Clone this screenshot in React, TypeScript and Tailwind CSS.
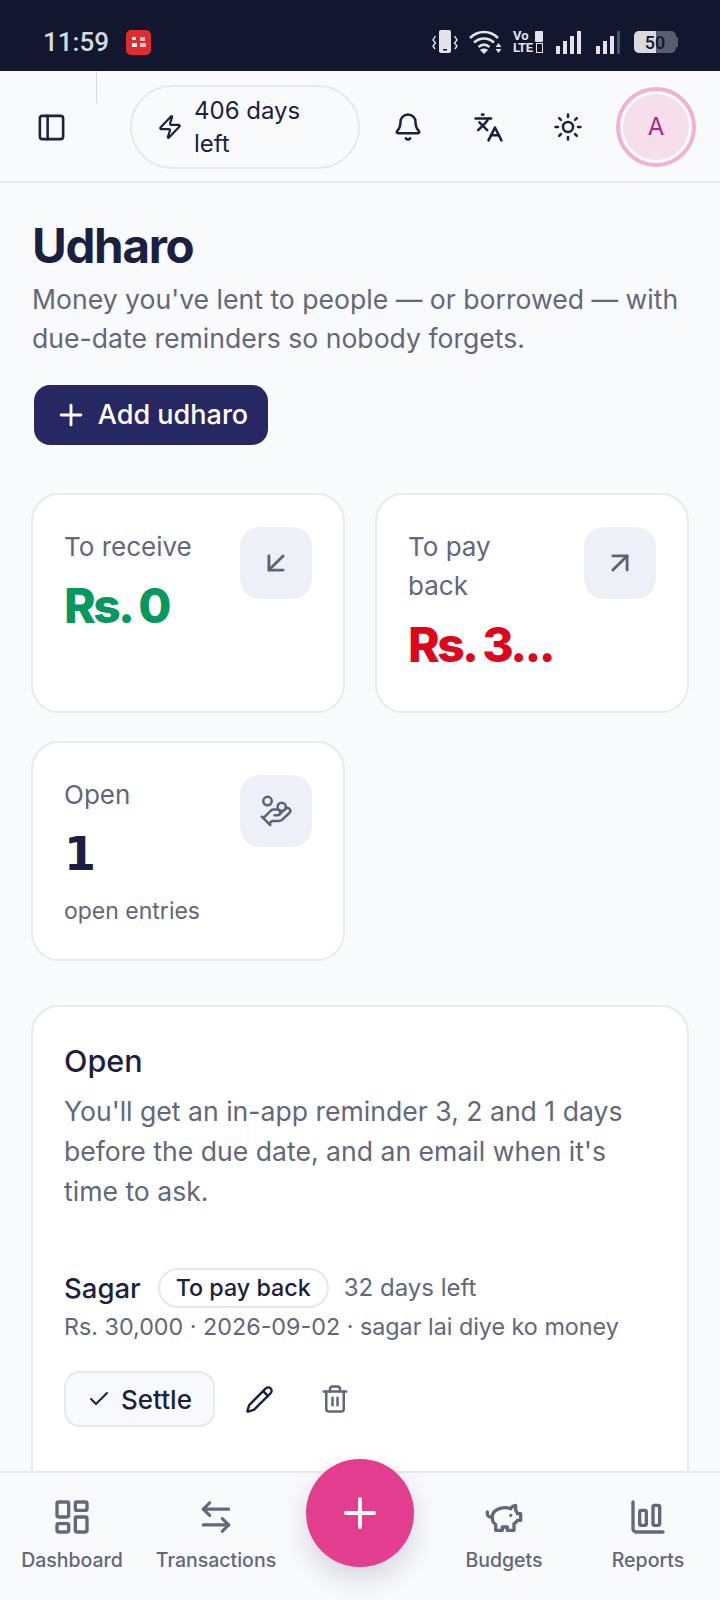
import {
  ArrowDownLeft,
  ArrowLeftRight,
  ArrowUpRight,
  Bell,
  Check,
  ChartColumnBig,
  HandCoins,
  Languages,
  LayoutDashboard,
  PanelLeft,
  Pencil,
  Plus,
  Sun,
  Trash2,
  Zap,
} from "lucide-react";
import type { ReactNode } from "react";

function StatusIcons() {
  return (
    <div className="flex items-center text-[#dfe1e8]">
      {/* vibrate */}
      <svg width="26" height="24" viewBox="0 0 26 24" fill="none" className="mr-[11px]">
        <rect x="7" y="0" width="12" height="23" rx="2" fill="#e3e4ea" />
        <rect x="11" y="19" width="4" height="1.500" fill="#12162e" />
        <path d="M3.500 6 1 10l2.500 3L1 16l2 3M22.500 6 25 10l-2.500 3 2.500 3-2 3" stroke="#e3e4ea" strokeWidth="1.400" />
      </svg>
      {/* wifi */}
      <svg width="33" height="24" viewBox="0 0 33 24" fill="none" className="mr-[11px]">
        <path d="M1 8c8-8 20-8 28 0M5 12.500c6-5.500 14-5.500 20 0M9.500 17c3.500-3 7.500-3 11 0" stroke="#e3e4ea" strokeWidth="2.500" />
        <path d="M15 24l-4-4c2-2 6-2 8 0z" fill="#e3e4ea" />
        <path d="M29.500 13l3 4h-6zM29.500 23l3-4h-6z" fill="#e3e4ea" />
      </svg>
      {/* vo lte */}
      <div className="mr-[13px] flex w-[30px] flex-col font-['Roboto',sans-serif] text-[13px] leading-[12px] font-bold text-[#e3e4ea]">
        <div className="flex items-center justify-between">
          <span>Vo</span>
          <span className="h-[11px] w-[8px] rounded-[1px] bg-[#e3e4ea]" />
        </div>
        <div className="flex items-center justify-between tracking-[-0.5px]">
          <span>LTE</span>
          <span className="h-[10px] w-[7px] border border-[#e3e4ea]" />
        </div>
      </div>
      {/* sim 1 */}
      <div className="mr-[15px] flex items-end gap-[3px]">
        <span className="h-[8px] w-[4px] bg-[#e3e4ea]" />
        <span className="h-[13px] w-[4px] bg-[#e3e4ea]" />
        <span className="h-[18px] w-[4px] bg-[#e3e4ea]" />
        <span className="h-[23px] w-[4px] bg-[#e3e4ea]" />
      </div>
      {/* sim 2 */}
      <div className="mr-[14px] flex items-end gap-[3px]">
        <span className="h-[8px] w-[4px] bg-[#e3e4ea]" />
        <span className="h-[13px] w-[4px] bg-[#e3e4ea]" />
        <span className="h-[18px] w-[4px] bg-[#e3e4ea]" />
        <span className="h-[23px] w-[3px] bg-[#4c5064]" />
      </div>
      {/* battery */}
      <div className="flex items-center">
        <div className="relative flex h-[22px] w-[42px] items-center justify-center overflow-hidden rounded-[5px] bg-[#5a5d6d]">
          <div className="absolute inset-y-0 left-0 w-[22px] bg-[#d9dae0]" />
          <span className="relative font-['Roboto',sans-serif] text-[18px] font-medium text-[#15182c]">50</span>
        </div>
        <span className="h-[10px] w-[2px] rounded-r-[1px] bg-[#5a5d6d]" />
      </div>
    </div>
  );
}

function StatCard({
  label,
  value,
  valueClass,
  note,
  icon,
}: {
  label: ReactNode;
  value: string;
  valueClass: string;
  note?: string;
  icon: ReactNode;
}) {
  return (
    <div className="flex h-[220px] min-w-0 items-start justify-between rounded-[28px] border-2 border-[#e8eaf0] bg-white px-[31px] pt-[32px]">
      <div className="min-w-0">
        <div className="text-[26px] leading-[39px] text-[#62677a]">{label}</div>
        <div className={`mt-[14px] text-[48px] leading-[52px] font-extrabold tracking-[-2.600px] ${valueClass}`}>
          {value}
        </div>
        {note && <div className="mt-[15px] text-[23px] leading-[32px] text-[#62677a]">{note}</div>}
      </div>
      <div className="flex h-[72px] w-[72px] shrink-0 items-center justify-center rounded-[20px] bg-[#edf0f7] text-[#5d6278]">
        {icon}
      </div>
    </div>
  );
}

function NavItem({ icon, label }: { icon: ReactNode; label: string }) {
  return (
    <div className="flex w-[144px] flex-col items-center text-[#62677a]">
      <div className="flex h-[40px] items-center justify-center">{icon}</div>
      <div className="mt-[9px] text-[19.500px] leading-[28px] font-medium">{label}</div>
    </div>
  );
}

// the older lucide piggy bank, the current one in the package has a different outline
function PiggyIcon() {
  return (
    <svg
      width="40"
      height="40"
      viewBox="0 0 24 24"
      fill="none"
      stroke="currentColor"
      strokeWidth="2"
      strokeLinecap="round"
      strokeLinejoin="round"
    >
      <path d="M19 5c-1.500 0-2.800 1.400-3 2-3.500-1.500-11-.3-11 5 0 1.800 0 3 2 4.500V20h4v-2h3v2h4v-4c1-.5 1.700-1 2-2h2v-4h-2c0-1-.5-1.500-1-2V5z" />
      <path d="M2 9v1c0 1.100.9 2 2 2h1" />
      <path d="M16 11h.01" />
    </svg>
  );
}

export default function App() {
  return (
    <div className="relative flex h-[1600px] w-[720px] flex-col overflow-hidden bg-[#f9fafc] font-['Inter',sans-serif] text-[#1c1f40]">
      {/* android status bar */}
      <div className="flex h-[71px] shrink-0 items-center justify-between bg-[#12162e] pt-[13px] pr-[42px] pl-[43px]">
        <div className="flex items-center gap-[17px]">
          <span className="font-['Roboto',sans-serif] text-[26px] font-medium text-[#d6d8df]">11:59</span>
          <div className="grid h-[25px] w-[25px] grid-cols-2 place-items-center rounded-[5px] bg-[#e02b30] px-[4px] py-[6px]">
            <span className="h-[3px] w-[4px] bg-white" />
            <span className="h-[4px] w-[5px] bg-white/70" />
            <span className="h-[4px] w-[5px] bg-white" />
            <span className="h-[4px] w-[6px] bg-white/70" />
          </div>
        </div>
        <StatusIcons />
      </div>

      {/* top bar */}
      <header className="relative flex h-[112px] shrink-0 items-center border-b-2 border-[#e6e8ef] pt-[2px]">
        <span className="absolute top-0 left-[96px] h-[32px] w-[1px] bg-[#d9dbe2]" />
        <PanelLeft className="ml-[36px] h-[31px] w-[31px]" strokeWidth={2} />
        <div className="ml-[63px] flex h-[84px] w-[230px] items-center rounded-full border-2 border-[#e6e8ef] pl-[25px]">
          <Zap className="h-[26px] w-[26px] shrink-0" strokeWidth={2} />
          <div className="ml-[11px] text-[24px] leading-[33px]">
            406 days
            <br />
            left
          </div>
        </div>
        <Bell className="ml-[33px] h-[30px] w-[30px]" strokeWidth={2} />
        <Languages className="ml-[50px] h-[31px] w-[31px]" strokeWidth={2} />
        <Sun className="ml-[49px] h-[30px] w-[30px]" strokeWidth={2} />
        <div className="ml-[33px] flex h-[80px] w-[80px] items-center justify-center rounded-full border-[4px] border-[#eeb3cf] p-[3px]">
          <div className="flex h-full w-full items-center justify-center rounded-full bg-[#f6dfeb] text-[24px] text-[#b4218a]">
            A
          </div>
        </div>
      </header>

      <main className="min-h-0 flex-1 overflow-hidden px-[31px] pt-[35px]">
        <h1 className="pl-[1px] text-[47.500px] leading-[56px] font-bold tracking-[-1.300px] text-[#1c1f40]">Udharo</h1>
        <p className="mt-[6px] pl-[1px] text-[26.600px] leading-[39px] text-[#62677a]">
          Money you've lent to people — or borrowed — with due-date reminders so nobody forgets.
        </p>

        <button className="mt-[27px] ml-[3px] flex h-[60px] w-[234px] items-center justify-center gap-[10px] rounded-[16px] bg-[#262763] text-[27px] font-medium text-white">
          <Plus className="h-[34px] w-[34px]" strokeWidth={2} />
          Add udharo
        </button>

        <div className="mt-[48px] grid grid-cols-2 gap-x-[30px] gap-y-[28px]">
          <StatCard
            label="To receive"
            value="Rs. 0"
            valueClass="text-[#07985f]"
            icon={<ArrowDownLeft className="h-[34px] w-[34px]" strokeWidth={2} />}
          />
          <StatCard
            label={
              <>
                To pay
                <br />
                back
              </>
            }
            value="Rs. 3..."
            valueClass="text-[#e0061a]"
            icon={<ArrowUpRight className="h-[34px] w-[34px]" strokeWidth={2} />}
          />
          <StatCard
            label="Open"
            value="1"
            valueClass="font-['DejaVu_Sans',sans-serif] !text-[46px] !tracking-normal text-[#1c1f40]"
            note="open entries"
            icon={<HandCoins className="h-[34px] w-[34px]" strokeWidth={1.75} />}
          />
        </div>

        <section className="mt-[44px] rounded-[28px] border-2 border-[#e8eaf0] bg-white px-[31px] pt-[32px] pb-[80px]">
          <h2 className="text-[30.500px] leading-[44px] font-medium text-[#1c1f40]">Open</h2>
          <p className="mt-[8px] text-[26.600px] leading-[40px] text-[#62677a]">
            You'll get an in-app reminder 3, 2 and 1 days before the due date, and an email when it's time to ask.
          </p>

          <div className="mt-[57px] flex items-center">
            <span className="text-[27.500px] leading-[40px] font-medium">Sagar</span>
            <span className="ml-[17px] flex h-[40px] items-center rounded-full border-2 border-[#e6e8ef] px-[16px] text-[23.300px] font-medium">
              To pay back
            </span>
            <span className="ml-[15px] text-[24px] text-[#62677a]">32 days left</span>
          </div>
          <div className="mt-[1px] text-[23.300px] leading-[36px] text-[#62677a]">
            Rs. 30,000 · 2026-09-02 · sagar lai diye ko money
          </div>

          <div className="mt-[26px] flex items-center">
            <button className="flex h-[56px] w-[151px] items-center justify-center gap-[10px] rounded-[16px] border-2 border-[#e6e8ef] bg-[#f8f9fc] text-[26px] font-medium">
              <Check className="h-[24px] w-[24px]" strokeWidth={2} />
              Settle
            </button>
            <Pencil className="ml-[30px] h-[29px] w-[29px]" strokeWidth={2} />
            <Trash2 className="ml-[46px] h-[30px] w-[30px] text-[#62677a]" strokeWidth={2} />
          </div>
        </section>
      </main>

      {/* bottom navigation */}
      <nav className="relative flex h-[129px] shrink-0 justify-between border-t-2 border-[#e6e8ef] bg-[#f9fafc] pt-[24px]">
        <div className="flex">
          <NavItem icon={<LayoutDashboard className="h-[40px] w-[40px]" strokeWidth={2} />} label="Dashboard" />
          <NavItem icon={<ArrowLeftRight className="h-[38px] w-[38px]" strokeWidth={2} />} label="Transactions" />
        </div>
        <div className="flex">
          <NavItem icon={<PiggyIcon />} label="Budgets" />
          <NavItem icon={<ChartColumnBig className="h-[40px] w-[40px]" strokeWidth={2} />} label="Reports" />
        </div>
        <button className="absolute top-[-14px] left-[306px] flex h-[108px] w-[108px] items-center justify-center rounded-full bg-[#e33d8f] text-white shadow-[0_12px_28px_rgba(30,30,60,0.16)]">
          <Plus className="h-[48px] w-[48px]" strokeWidth={2} />
        </button>
      </nav>
    </div>
  );
}
